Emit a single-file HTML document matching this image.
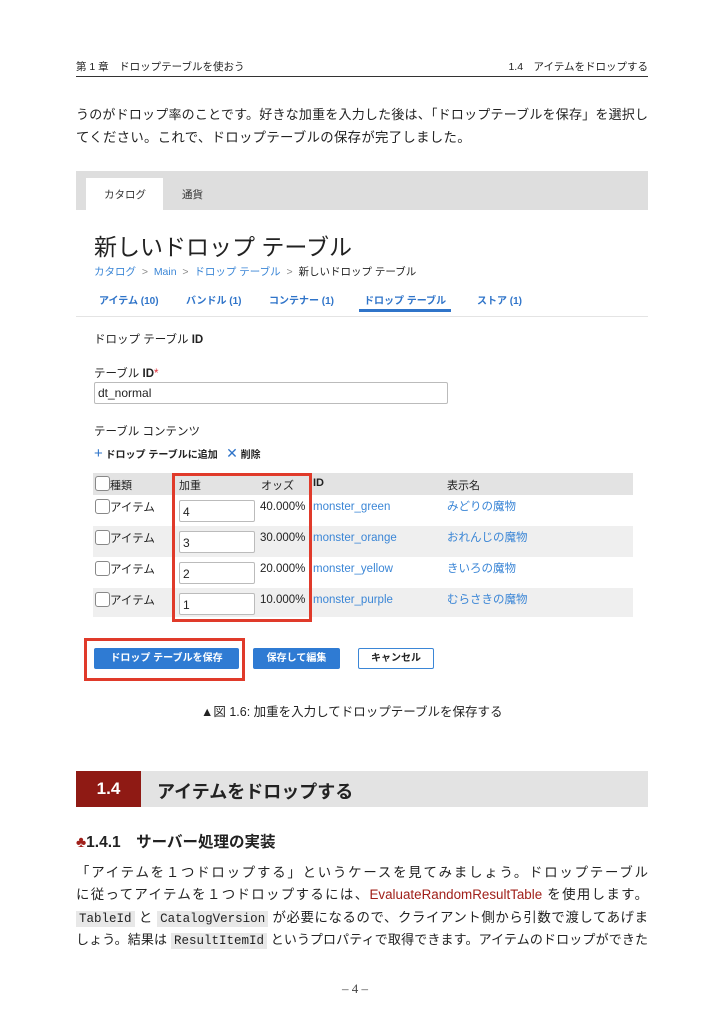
<!DOCTYPE html>
<html><head><meta charset="utf-8"><style>
*{margin:0;padding:0;box-sizing:border-box}
body{width:724px;height:1024px;background:#fff;position:relative;font-family:"Liberation Sans","Noto Sans CJK JP",sans-serif;color:#222;overflow:hidden}
.a{position:absolute;white-space:nowrap}
.p{font-size:13.4px;color:#222}
.j{width:572px;text-align:justify;text-align-last:justify;white-space:normal;height:20px;overflow:visible}
.blue{color:#3b86d6}
.tab{font-size:10px;font-weight:bold;color:#2f74c9}
.inp{position:absolute;border:1px solid #bbb;border-radius:2px;background:#fff;font-size:12px;padding:4px 4px 0 3px}
.cb{position:absolute;width:15px;height:15px;border:1px solid #888;border-radius:3px;background:#fff}
.btn{position:absolute;height:21px;border-radius:2px;font-size:10px;font-weight:bold;text-align:center;line-height:21px}
code{font-family:"Liberation Mono",monospace;background:#e8e8e8;padding:1px 3px;font-size:12.5px;letter-spacing:0}
</style></head><body>
<div class="a" style="left:76px;top:59px;font-size:10.5px">第 1 章　ドロップテーブルを使おう</div>
<div class="a" style="right:76px;top:59px;font-size:10.5px">1.4　アイテムをドロップする</div>
<div class="a" style="left:76px;top:76px;width:572px;height:1px;background:#333"></div>
<div class="a p j" style="left:76px;top:104px;font-size:13px">うのがドロップ率のことです。好きな加重を入力した後は、「ドロップテーブルを保存」を選択し</div>
<div class="a p" style="left:76px;top:126px;letter-spacing:0.3px">てください。これで、ドロップテーブルの保存が完了しました。</div>

<div class="a" style="left:76px;top:171px;width:572px;height:519px;background:#fff;overflow:hidden">
 <div class="a" style="left:0;top:0;width:572px;height:39px;background:#dedede"></div>
 <div class="a" style="left:10px;top:7px;width:77px;height:32px;background:#fff"></div>
 <div class="a" style="left:28px;top:16px;font-size:10.5px;color:#333">カタログ</div>
 <div class="a" style="left:106px;top:16px;font-size:10.5px;color:#333">通貨</div>
 <div class="a" style="left:18px;top:57px;font-size:23px;color:#222">新しいドロップ テーブル</div>
 <div class="a" style="left:18px;top:93px;font-size:10.5px;color:#888"><span class="blue">カタログ</span> &nbsp;&gt;&nbsp; <span class="blue">Main</span> &nbsp;&gt;&nbsp; <span class="blue">ドロップ テーブル</span> &nbsp;&gt;&nbsp; <span style="color:#222">新しいドロップ テーブル</span></div>
 <div class="a tab" style="left:23px;top:121px">アイテム (10)</div>
 <div class="a tab" style="left:110px;top:121px">バンドル (1)</div>
 <div class="a tab" style="left:193px;top:121px">コンテナー (1)</div>
 <div class="a tab" style="left:288px;top:121px">ドロップ テーブル</div>
 <div class="a tab" style="left:401px;top:121px">ストア (1)</div>
 <div class="a" style="left:283px;top:138px;width:92px;height:3px;background:#2f74c9"></div>
 <div class="a" style="left:0;top:145px;width:572px;height:1px;background:#e4e4e4"></div>
 <div class="a" style="left:18px;top:160px;font-size:11.5px">ドロップ テーブル <b>ID</b></div>
 <div class="a" style="left:18px;top:194px;font-size:11.5px">テーブル <b>ID</b><span style="color:#e0303a">*</span></div>
 <div class="inp" style="left:18px;top:211px;width:354px;height:22px;font-size:12px;padding-top:3px">dt_normal</div>
 <div class="a" style="left:18px;top:252px;font-size:11.5px">テーブル コンテンツ</div>
 <div class="a" style="left:18px;top:274px;font-size:10px;font-weight:bold"><span style="color:#2f74c9;font-size:15px;font-weight:normal">+</span> ドロップ テーブルに追加 &nbsp;&nbsp;<span style="color:#2f74c9;font-size:14px;font-weight:normal">✕</span> 削除</div>
 <div class="a" style="left:17px;top:302px;width:540px;height:144px;background:#e3e3e3"></div>
 <div class="a" style="left:17px;top:324px;width:540px;height:31px;background:#fff"></div>
 <div class="a" style="left:17px;top:355px;width:540px;height:31px;background:#efefef"></div>
 <div class="a" style="left:17px;top:386px;width:540px;height:31px;background:#fff"></div>
 <div class="a" style="left:17px;top:417px;width:540px;height:29px;background:#efefef"></div>
 <div class="cb" style="left:19px;top:305px"></div>
 <div class="a" style="left:34px;top:306px;font-size:11px">種類</div>
 <div class="a" style="left:103px;top:306px;font-size:11px">加重</div>
 <div class="a" style="left:185px;top:306px;font-size:11px">オッズ</div>
 <div class="a" style="left:237px;top:306px;font-size:11px;font-weight:bold">ID</div>
 <div class="a" style="left:371px;top:306px;font-size:11px">表示名</div>

 <div class="cb" style="left:19px;top:328px"></div><div class="a" style="left:34px;top:328px;font-size:11.5px">アイテム</div>
 <div class="inp" style="left:103px;top:329px;width:76px;height:22px">4</div>
 <div class="a" style="left:184px;top:330px;font-size:11.5px">40.000%</div>
 <div class="a blue" style="left:237px;top:330px;font-size:11.5px">monster_green</div>
 <div class="a blue" style="left:371px;top:327px;font-size:11.5px">みどりの魔物</div>

 <div class="cb" style="left:19px;top:359px"></div><div class="a" style="left:34px;top:359px;font-size:11.5px">アイテム</div>
 <div class="inp" style="left:103px;top:360px;width:76px;height:22px">3</div>
 <div class="a" style="left:184px;top:361px;font-size:11.5px">30.000%</div>
 <div class="a blue" style="left:237px;top:361px;font-size:11.5px">monster_orange</div>
 <div class="a blue" style="left:371px;top:358px;font-size:11.5px">おれんじの魔物</div>

 <div class="cb" style="left:19px;top:390px"></div><div class="a" style="left:34px;top:390px;font-size:11.5px">アイテム</div>
 <div class="inp" style="left:103px;top:391px;width:76px;height:22px">2</div>
 <div class="a" style="left:184px;top:392px;font-size:11.5px">20.000%</div>
 <div class="a blue" style="left:237px;top:392px;font-size:11.5px">monster_yellow</div>
 <div class="a blue" style="left:371px;top:389px;font-size:11.5px">きいろの魔物</div>

 <div class="cb" style="left:19px;top:421px"></div><div class="a" style="left:34px;top:421px;font-size:11.5px">アイテム</div>
 <div class="inp" style="left:103px;top:422px;width:76px;height:22px">1</div>
 <div class="a" style="left:184px;top:423px;font-size:11.5px">10.000%</div>
 <div class="a blue" style="left:237px;top:423px;font-size:11.5px">monster_purple</div>
 <div class="a blue" style="left:371px;top:420px;font-size:11.5px">むらさきの魔物</div>

 <div class="a" style="left:96px;top:302px;width:140px;height:149px;border:3px solid #e03a2a"></div>
 <div class="a" style="left:8px;top:467px;width:161px;height:43px;border:3px solid #e03a2a"></div>
 <div class="btn" style="left:18px;top:477px;width:145px;background:#2f7bd3;color:#fff">ドロップ テーブルを保存</div>
 <div class="btn" style="left:177px;top:477px;width:87px;background:#2f7bd3;color:#fff">保存して編集</div>
 <div class="btn" style="left:282px;top:477px;width:76px;border:1px solid #3b86d6;background:#fff;color:#222;line-height:19px">キャンセル</div>
</div>

<div class="a" style="left:201px;top:701px;font-size:12.5px">▲図 1.6: 加重を入力してドロップテーブルを保存する</div>

<div class="a" style="left:76px;top:771px;width:572px;height:36px;background:#e3e3e3"></div>
<div class="a" style="left:76px;top:771px;width:65px;height:36px;background:#8f1a14;color:#fff;font-size:17px;font-weight:bold;text-align:center;line-height:36px">1.4</div>
<div class="a" style="left:157px;top:778px;font-size:18px;font-weight:bold">アイテムをドロップする</div>
<div class="a" style="left:76px;top:830px;font-size:15.5px;font-weight:bold"><span style="color:#a0201a">♣</span>1.4.1　サーバー処理の実装</div>
<div class="a p j" style="left:76px;top:861px">「アイテムを１つドロップする」というケースを見てみましょう。ドロップテーブル</div>
<div class="a p j" style="left:76px;top:883px">に従ってアイテムを１つドロップするには、<span style="color:#a0201a">EvaluateRandomResultTable</span> を使用します。</div>
<div class="a p j" style="left:76px;top:906px"><code>TableId</code> と <code>CatalogVersion</code> が必要になるので、クライアント側から引数で渡してあげま</div>
<div class="a p j" style="left:76px;top:929px;font-size:13px">しょう。結果は <code>ResultItemId</code> というプロパティで取得できます。アイテムのドロップができた</div>
<div class="a" style="left:342px;top:981px;font-size:13px;font-family:'Liberation Serif',serif;color:#444">– 4 –</div>
</body></html>
